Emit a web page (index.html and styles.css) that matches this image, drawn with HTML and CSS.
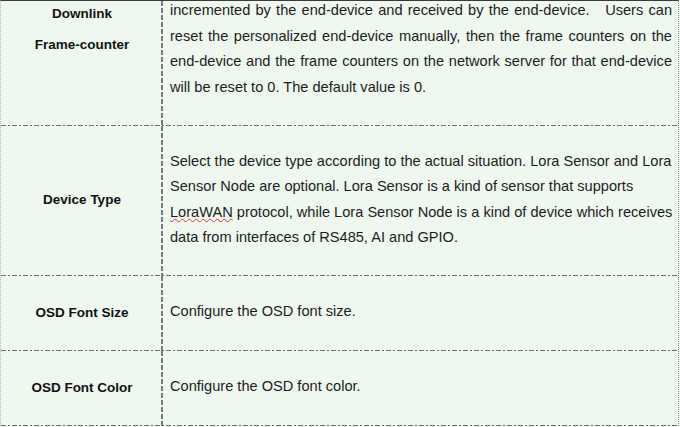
FILE: index.html
```html
<!DOCTYPE html>
<html>
<head>
<meta charset="utf-8">
<link rel="stylesheet" href="styles.css">
</head>
<body>
<div class="table">
  <div class="row row-first">
    <div class="label label-top"><p class="label-text">Downlink<br>Frame-counter</p></div>
    <div class="desc desc-top"><p class="text justify">incremented by the end-device and received by the end-device.&nbsp;&nbsp; Users can reset the personalized end-device manually, then the frame counters on the end-device and the frame counters on the network server for that end-device will be reset to 0. The default value is 0.</p></div>
  </div>
  <div class="row row-tall">
    <div class="label"><p class="label-text">Device Type</p></div>
    <div class="desc"><p class="text">Select the device type according to the actual situation. Lora Sensor and Lora Sensor Node are optional. Lora Sensor is a kind of sensor that supports <span class="spell">LoraWAN</span> protocol, while Lora Sensor Node is a kind of device which receives data from interfaces of RS485, AI and GPIO.</p></div>
  </div>
  <div class="row row-short">
    <div class="label"><p class="label-text">OSD Font Size</p></div>
    <div class="desc"><p class="text">Configure the OSD font size.</p></div>
  </div>
  <div class="row row-short">
    <div class="label"><p class="label-text">OSD Font Color</p></div>
    <div class="desc"><p class="text">Configure the OSD font color.</p></div>
  </div>
</div>
</body>
</html>
```
FILE: styles.css
```css
html, body {
  margin: 0;
  padding: 0;
  background: #eef8ef;
}
body {
  font-family: "Liberation Sans", Arial, sans-serif;
  color: #1c1c1c;
  width: 680px;
  height: 427px;
  overflow: hidden;
}
p { margin: 0; }
.table {
  width: 677px;
  border-top: 1px solid #3a3a3a;
  border-left: 1px dotted #b8b8b8;
  border-right: 1px dotted #8a8a8a;
  background: #eef8ef;
}
.row {
  display: grid;
  grid-template-columns: 162px 1fr;
  background-image: repeating-linear-gradient(to right, #6f6f6f 0 5px, transparent 5px 7px, #6f6f6f 7px 9px, transparent 9px 11px);
  background-size: 100% 1px;
  background-position: left bottom;
  background-repeat: no-repeat;
}
.row-first { height: 125px; }
.row-tall { height: 150px; }
.row-short { height: 75px; }
.label {
  display: flex;
  align-items: center;
  justify-content: center;
  text-align: center;
  font-weight: bold;
  font-size: 13.5px;
  color: #111;
  padding-bottom: 3px;
  background-image: repeating-linear-gradient(to bottom, #7a7a7a 0 5px, transparent 5px 7px);
  background-size: 2px 100%;
  background-position: right top;
  background-repeat: no-repeat;
}
.label-top {
  align-items: flex-start;
  line-height: 31px;
  padding-bottom: 0;
}
.label-top .label-text { margin-top: -3px; }
.desc {
  display: flex;
  align-items: center;
  font-size: 14.6px;
  line-height: 25.5px;
  padding: 0 2px 3px 7px;
}
.desc-top { align-items: flex-start; padding-right: 6px; padding-bottom: 0; }
.desc-top .text { margin-top: -3px; }
.justify { text-align: justify; }
.spell {
  text-decoration: underline wavy #d23a3a;
  text-decoration-thickness: 1px;
  text-underline-offset: 1px;
}
```
